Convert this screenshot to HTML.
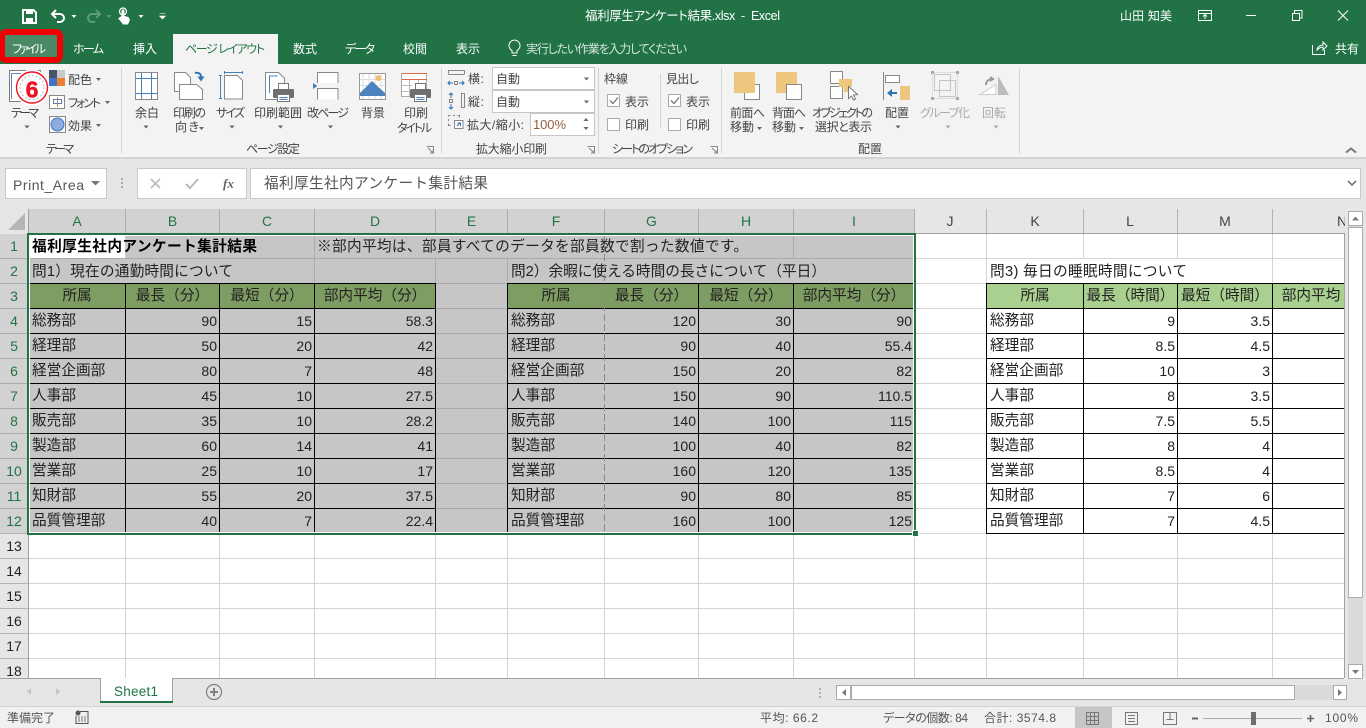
<!DOCTYPE html>
<html lang="ja"><head><meta charset="utf-8"><title>福利厚生アンケート結果.xlsx - Excel</title>
<style>
html,body{margin:0;padding:0;width:1366px;height:728px;overflow:hidden;background:#f1f1f1}
body{position:relative;font-family:"Liberation Sans","Noto Sans CJK JP",sans-serif}
svg{position:absolute;left:0;top:0;display:block}
svg text{font-family:"Liberation Sans","Noto Sans CJK JP",sans-serif;font-size:12px;fill:#444;white-space:pre;font-feature-settings:"palt"}
svg .w{fill:#fff}
svg .g{fill:#217346;font-size:14px}
svg .h{fill:#444;font-size:14px}
svg .n{fill:#222;font-size:14px}
svg .dis{fill:#aaa}
svg .c{fill:#222;font-size:14.67px;font-feature-settings:normal}
svg .s{fill:#555;font-size:12px}
#sheet{position:absolute;left:0;top:0;width:1344px;height:678px;overflow:hidden}
table{position:absolute;top:283px;border-collapse:separate;border-spacing:0;table-layout:fixed;border-top:1px solid #000;border-left:1px solid #000;color:#222}
td{box-sizing:border-box;height:25px;border-right:1px solid #000;border-bottom:1px solid #000;padding:0 2px 0 3px;font-size:14.67px;line-height:24px;white-space:nowrap;overflow:hidden}
td.r{text-align:right;font-size:14px;padding-right:2px}
tr.hd td{text-align:center;padding:0}
#t1 tr.hd td,#t2 tr.hd td{background:#7e9d63}
#t3 tr.hd td{background:#a9d08e}
#t2 td:first-child{border-right-color:transparent}
</style></head><body>
<svg width="1366" height="728" viewBox="0 0 1366 728">
<defs>
<g id="pr"><rect x="5.500" y=".5" width="10" height="7" fill="#fff" stroke="#777"/><rect x="0" y="6" width="21" height="9" rx="1.500" fill="#6f6f6f"/><rect x="4.500" y="11.500" width="12" height="7" fill="#fff" stroke="#777"/><path d="M6.500 14.500h8M6.500 16.500h8" stroke="#4a7ebb"/></g>
</defs>
<rect width="1366" height="64" fill="#217346"/>
<rect y="64" width="1366" height="93" fill="#f3f3f3"/>
<rect y="157" width="1366" height="2" fill="#d4d4d4"/>
<rect y="159" width="1366" height="50" fill="#e6e6e6"/>

<!-- QAT -->
<path d="M23 10h10.500l2.500 2.500V23H23z" fill="none" stroke="#fff" stroke-width="2"/><rect x="26" y="10" width="7" height="4" fill="#fff"/><rect x="26" y="18" width="7" height="5" fill="#fff"/>
<path d="M56 10l-4 4 4 4M52 14h8a4 4 0 0 1 0 8h-3" fill="none" stroke="#fff" stroke-width="2"/>
<path d="M71.500 15h5l-2.500 3z" fill="#fff"/>
<path d="M96 10l4 4-4 4M100 14h-8a4 4 0 0 0 0 8h3" fill="none" stroke="#5d9a79" stroke-width="2"/>
<path d="M106.500 15h5l-2.500 3z" fill="#5d9a79"/>
<path d="M121.500 16V11a1.500 1.500 0 0 1 3 0v5l4 1 1.500 3-2 4.500h-5l-3-4-2-2z" fill="#fff"/><circle cx="123" cy="11.500" r="3.500" fill="none" stroke="#fff" stroke-width="1.200"/>
<path d="M138.500 15h5l-2.500 3z" fill="#fff"/>
<path d="M159.500 13.500h6M159.500 16h6l-3 3z" fill="#fff" stroke="#fff" stroke-width=".6"/>

<text class="w" x="585" y="20" textLength="195" style="font-size:12.500px">福利厚生アンケート結果.xlsx  -  Excel</text>
<text class="w" x="1120" y="20" textLength="52">山田 知美</text>
<rect x="1198.500" y="10.500" width="13" height="10" fill="none" stroke="#fff"/><path d="M1199 13.500h12M1205 19v-4M1203 16.500l2-2 2 2" stroke="#fff" fill="none"/>
<path d="M1246 15.500h10" stroke="#fff"/>
<path d="M1292.500 13.500h7v7h-7zM1294.500 13v-2.500h7.500v7.500h-2.500" stroke="#fff" fill="none"/>
<path d="M1338 10.500l10 10M1348 10.500l-10 10" stroke="#fff" fill="none"/>

<!-- tabs -->
<rect x="173" y="34" width="105" height="30" fill="#f3f3f3"/>
<rect x="2" y="32" width="58" height="28" rx="4" fill="#4a8964" stroke="#f00000" stroke-width="6"/>
<text class="w" x="12" y="53" textLength="34">ファイル</text>
<text class="w" x="73" y="53" textLength="31">ホーム</text>
<text class="w" x="133" y="53" textLength="24">挿入</text>
<text x="185" y="53" textLength="80" style="fill:#217346">ページ レイアウト</text>
<text class="w" x="293" y="53" textLength="24">数式</text>
<text class="w" x="345" y="53" textLength="30">データ</text>
<text class="w" x="403" y="53" textLength="24">校閲</text>
<text class="w" x="456" y="53" textLength="24">表示</text>
<path d="M512 50.500a5.500 5.500 0 1 1 5 0v2.500h-5zM512.500 55.500h4" fill="none" stroke="#fff"/>
<text x="526" y="53" textLength="161" style="fill:#d5e5dc">実行したい作業を入力してください</text>
<path d="M1312.500 45v9.500h12V50M1317 50c0-3 3-5 6-5v-3l4 4-4 4v-3c-2 0-4 1-6 3z" fill="none" stroke="#fff"/>
<text class="w" x="1335" y="53" textLength="24">共有</text>

<!-- ribbon separators -->
<path d="M121.500 68v85M441.500 68v85M598.500 68v85M721.500 68v85M1019.500 68v85" stroke="#d4d4d4"/>
<path d="M660.500 74v54" stroke="#d4d4d4"/>

<!-- theme -->
<rect x="9.500" y="70.500" width="31" height="31" fill="#fff" stroke="#7d7d7d"/><path d="M12 73.500h25M11.500 73v26" stroke="#5b87c5"/>
<circle cx="32" cy="87.500" r="18" fill="#fff"/>
<circle cx="32" cy="87.500" r="15.500" fill="none" stroke="#f01020" stroke-width="1.400"/>
<circle cx="32" cy="87.500" r="12" fill="none" stroke="#c8c8c8" stroke-width="1.500" stroke-dasharray="2 2"/>
<text x="32" y="97.500" text-anchor="middle" style="font-size:23px;font-weight:700;fill:#ee1122;stroke:#ee1122;stroke-width:.5px">6</text>
<text x="11" y="117" textLength="28">テーマ</text><path d="M24.500 125.500h5l-2.500 3z" fill="#666"/>
<rect x="49" y="70" width="8" height="8" fill="#44546a"/><rect x="57" y="70" width="8" height="8" fill="#c8c8c8"/><rect x="49" y="78" width="8" height="8" fill="#4472c4"/><rect x="57" y="78" width="8" height="8" fill="#ed7d31"/>
<text x="68" y="84" textLength="24">配色</text><path d="M96 78h5l-2.500 3z" fill="#666"/>
<rect x="49.500" y="95.500" width="15" height="13" fill="#fff" stroke="#888"/><path d="M57.500 97v10" stroke="#d08040"/><path d="M53.500 99.500h8v4h-8z" fill="none" stroke="#5a80b5"/>
<text x="68" y="107" textLength="33">フォント</text><path d="M105 101h5l-2.500 3z" fill="#666"/>
<rect x="49.500" y="116.500" width="16" height="16" fill="#fff" stroke="#888"/><circle cx="57.500" cy="124.500" r="6.500" fill="#8faadc" stroke="#4472c4"/>
<text x="68" y="130" textLength="24">効果</text><path d="M96 124h5l-2.500 3z" fill="#666"/>
<text x="46" y="153" textLength="28">テーマ</text>

<!-- margins -->
<rect x="135.500" y="72.500" width="22" height="27" fill="#fff" stroke="#888"/><path d="M141.500 73v26M151.500 73v26M136 78.500h21M136 93.500h21" stroke="#4a7ebb"/>
<text x="135" y="117" textLength="24">余白</text><path d="M143.500 125.500h5l-2.500 3z" fill="#666"/>
<!-- orientation -->
<path d="M174.500 72.500h11l5 5v14h-16z" fill="#fff" stroke="#888"/><path d="M179.500 84.500h17l6 5v10h-23z" fill="#fff" stroke="#888"/>
<path d="M195 73c4-1 6 1 6 4" fill="none" stroke="#2f75b5" stroke-width="2"/><path d="M197.500 76.500h7l-3.500 5z" fill="#2f75b5"/>
<text x="173" y="117" textLength="33">印刷の</text><text x="175" y="131" textLength="24">向き</text><path d="M199 127h5l-2.500 3z" fill="#666"/>
<!-- size -->
<path d="M224.500 75.500h13l5 5v18.500h-18z" fill="#fff" stroke="#888"/><path d="M220.500 75v24M219 75.500h3M219 98.500h3M224 72.500h19M224.500 71v3M242.500 71v3" stroke="#4a7ebb" fill="none"/>
<text x="216" y="117" textLength="29">サイズ</text><path d="M229.500 125.500h5l-2.500 3z" fill="#666"/>
<!-- print area -->
<path d="M265.500 72.500h13l6 6v21h-19z" fill="#fff" stroke="#888"/><path d="M269.500 93v-17h8" fill="none" stroke="#4a7ebb"/>
<use href="#pr" x="273" y="83"/>
<text x="254" y="117" textLength="48">印刷範囲</text><path d="M278 125.500h5l-2.500 3z" fill="#666"/>
<!-- breaks -->
<path d="M317.500 83V72.500h20.500V83M317.500 99.500V88.500h20.500v11" fill="#fff" stroke="#888"/><path d="M313 83l4.500 3-4.500 3z" fill="#4a7ebb"/>
<text x="307" y="117" textLength="42">改ページ</text><path d="M328 125.500h5l-2.500 3z" fill="#666"/>
<!-- background -->
<rect x="359.500" y="73.500" width="26" height="26" fill="#fff" stroke="#999"/><path d="M363 74v25M369 74v25M375 74v25M381 74v25M360 79.500h25M360 85.500h25M360 92.500h25" stroke="#ddd"/>
<circle cx="378.500" cy="78" r="3" fill="#f0c070"/><path d="M360 93l12-12 13 12v3h-25z" fill="#4e84bd"/><path d="M376 84l9 8" stroke="#fff"/>
<text x="361" y="117" textLength="24">背景</text>
<!-- titles -->
<rect x="401.500" y="73.500" width="25" height="23" fill="#fff" stroke="#aaa"/><path d="M402 73.500h25M402 79.500h25" stroke="#d9694a"/><path d="M402 85.500h10M402 91.500h8M409.500 80v16M418.500 80v4" stroke="#bbb"/>
<use href="#pr" x="410" y="83"/>
<text x="404" y="117" textLength="24">印刷</text><text x="397" y="132" textLength="35">タイトル</text>
<text x="246" y="153" textLength="54">ページ設定</text>
<path d="M426.500 146.500h7v7M428 148l5 5M433 150v3h-3" fill="none" stroke="#888"/>

<!-- scale -->
<path d="M448.500 74.500V70.500h16v4M449 74.500h15" fill="none" stroke="#888"/><rect x="454.500" y="81.500" width="3" height="3" fill="none" stroke="#888"/><path d="M448 83h5M459 83h5M450 81l-2 2 2 2M462 81l2 2-2 2" fill="none" stroke="#2f75b5"/>
<rect x="461.500" y="93.500" width="3" height="14" fill="none" stroke="#888"/><path d="M451 93v5M451 104v5M449 95l2-2 2 2M449 107l2 2 2-2" fill="none" stroke="#2f75b5"/><rect x="449.500" y="99.500" width="3" height="3" fill="none" stroke="#888"/>
<text x="468" y="83" textLength="16">横:</text><text x="468" y="106" textLength="16">縦:</text>
<rect x="492.500" y="67.500" width="102" height="22" fill="#fff" stroke="#c6c6c6"/><rect x="492.500" y="90.500" width="102" height="22" fill="#fff" stroke="#c6c6c6"/>
<text x="496" y="83" textLength="24">自動</text><text x="496" y="106" textLength="24">自動</text>
<path d="M584 77.500h5l-2.500 3zM584 100.500h5l-2.500 3z" fill="#666"/>
<path d="M448.500 116.500v-1h2M453 115.500h2M457.500 115.500h2v2M448.500 119v2M448.500 123.500v2h2" fill="none" stroke="#888"/><rect x="454.500" y="120.500" width="8.500" height="8" fill="#fff" stroke="#888"/><path d="M457 126l3-3M457.500 123h3v3" fill="none" stroke="#2f75b5"/>
<text x="467" y="129" textLength="57">拡大/縮小:</text>
<rect x="530.500" y="113.500" width="64" height="22" fill="#fff" stroke="#c6c6c6"/>
<text x="533" y="129" textLength="33" style="fill:#94603a;font-size:13px">100%</text>
<path d="M583.500 121h5l-2.500-3zM583.500 127h5l-2.500 3z" fill="#666"/>
<text x="476" y="153" textLength="71">拡大縮小印刷</text>
<path d="M587.500 146.500h7v7M589 148l5 5M594 150v3h-3" fill="none" stroke="#888"/>

<!-- sheet options -->
<text x="604" y="83" textLength="24">枠線</text><text x="666" y="83" textLength="33">見出し</text>
<rect x="607.500" y="94.500" width="12" height="12" fill="#fff" stroke="#ababab"/><path d="M610 100.500l3 3 5-6" fill="none" stroke="#777" stroke-width="1.300"/>
<rect x="668.500" y="94.500" width="12" height="12" fill="#fff" stroke="#ababab"/><path d="M671 100.500l3 3 5-6" fill="none" stroke="#777" stroke-width="1.300"/>
<rect x="607.500" y="118.500" width="12" height="12" fill="#fff" stroke="#ababab"/><rect x="668.500" y="118.500" width="12" height="12" fill="#fff" stroke="#ababab"/>
<text x="625" y="106" textLength="24">表示</text><text x="686" y="106" textLength="24">表示</text>
<text x="625" y="129" textLength="24">印刷</text><text x="686" y="129" textLength="24">印刷</text>
<text x="612" y="153" textLength="81">シートのオプション</text>
<path d="M710.500 146.500h7v7M712 148l5 5M717 150v3h-3" fill="none" stroke="#888"/>

<!-- arrange -->
<rect x="744.500" y="84.500" width="15" height="15" fill="#fff" stroke="#888"/><rect x="734" y="72" width="21" height="21" fill="#edc77e"/>
<text x="730" y="117" textLength="35">前面へ</text><text x="730" y="131" textLength="24">移動</text><path d="M757 127h5l-2.500 3z" fill="#666"/>
<rect x="776" y="72" width="21" height="21" fill="#edc77e"/><rect x="786.500" y="84.500" width="15" height="15" fill="#fff" stroke="#888"/>
<text x="772" y="117" textLength="34">背面へ</text><text x="772" y="131" textLength="24">移動</text><path d="M799 127h5l-2.500 3z" fill="#666"/>
<rect x="830.500" y="71.500" width="12" height="12" fill="#fff" stroke="#888"/><rect x="830.500" y="86.500" width="12" height="12" fill="#fff" stroke="#888"/>
<path d="M839 79h13v8h-4v5h-4v-5h-5z" fill="#edc77e"/><path d="M848.500 86.500v12l3-2.500 2 4 2-1-2-4 4-.5z" fill="#fff" stroke="#777"/>
<text x="812" y="117" textLength="61">オブジェクトの</text><text x="815" y="131" textLength="57">選択と表示</text>
<path d="M883.500 72v28" stroke="#888"/><rect x="885.500" y="75.500" width="14" height="7" fill="#fff" stroke="#888"/><rect x="900" y="86" width="10" height="14" fill="#edc77e"/><path d="M887 93l5-4v3h5v2h-5v3z" fill="#2f75b5"/>
<text x="885" y="117" textLength="24">配置</text><path d="M895.500 125.500h5l-2.500 3z" fill="#666"/>
<!-- group disabled -->
<rect x="932.500" y="72.500" width="25" height="26" fill="none" stroke="#ddd"/><rect x="934.500" y="74.500" width="16" height="16" fill="#f6f3f6" stroke="#c4c4c4"/><rect x="939.500" y="80.500" width="16" height="16" fill="none" stroke="#c4c4c4"/>
<path d="M931 71h3v3h-3zM956 71h3v3h-3zM931 97h3v3h-3zM956 97h3v3h-3z" fill="#aaa"/>
<text class="dis" x="920" y="117" textLength="50">グループ化</text><path d="M945.500 125.500h5l-2.500 3z" fill="#aaa"/>
<path d="M998 76l11 19h-11z" fill="#bbb"/><path d="M980 94.500l16-10v10z" fill="#fff" stroke="#ccc"/><path d="M986 85c0-4 3-6 6-6" fill="none" stroke="#999" stroke-width="2"/><path d="M990 76l5 3-5 3z" fill="#999"/>
<text class="dis" x="982" y="117" textLength="24">回転</text><path d="M993.500 125.500h5l-2.500 3z" fill="#aaa"/>
<text x="858" y="153" textLength="24">配置</text>
<path d="M1346 152.500l5-4 5 4" fill="none" stroke="#777" stroke-width="2"/>

<!-- formula bar -->
<rect x="5.500" y="168.500" width="101" height="30" fill="#fff" stroke="#c8c8c8"/>
<text x="13" y="190" textLength="71" style="font-size:14px;fill:#555">Print_Area</text>
<path d="M91 181h9l-4.500 4.500z" fill="#777"/>
<path d="M121 178h2v2h-2zM121 182h2v2h-2zM121 186h2v2h-2z" fill="#aaa"/>
<rect x="137.500" y="168.500" width="109" height="30" fill="#fff" stroke="#c8c8c8"/>
<path d="M151 179l9 9M160 179l-9 9" stroke="#bbb" stroke-width="1.600"/>
<path d="M186 184l4 4 8-9" fill="none" stroke="#bbb" stroke-width="2"/>
<text x="223" y="188" style="font-family:'Liberation Serif',serif;font-style:italic;font-weight:700;font-size:13px;fill:#666">fx</text>
<rect x="250.500" y="168.500" width="1110" height="30" fill="#fff" stroke="#c8c8c8"/>
<text x="264" y="188" textLength="224" style="font-size:14.670px;fill:#555;font-feature-settings:normal">福利厚生社内アンケート集計結果</text>
<path d="M1348 181l4 4 4-4" fill="none" stroke="#666" stroke-width="1.500"/>

<!-- headers -->
<rect y="209" width="1366" height="25" fill="#e6e6e6"/>
<rect x="0" y="234" width="28" height="444" fill="#e6e6e6"/>
<rect x="29" y="209" width="886" height="24" fill="#d2d2d2"/>
<rect x="0" y="234" width="28" height="299" fill="#d2d2d2"/>
<path d="M25 213v17H8z" fill="#b5b5b5"/>
<path d="M28.500 209v469" stroke="#a0a0a0"/>
<path d="M28 233.500h1316M1344.500 233v445" stroke="#a0a0a0"/>
<path d="M125.500 209v24M219.500 209v24M314.500 209v24M435.500 209v24M507.500 209v24M604.500 209v24M698.500 209v24M793.500 209v24M914.500 209v24" stroke="#ababab"/>
<path d="M986.500 209v24M1083.500 209v24M1177.500 209v24M1272.500 209v24" stroke="#b4b4b4"/>
<path d="M0 258.500h28M0 283.500h28M0 308.500h28M0 333.500h28M0 358.500h28M0 383.500h28M0 408.500h28M0 433.500h28M0 458.500h28M0 483.500h28M0 508.500h28" stroke="#ababab"/>
<path d="M0 533.500h28M0 558.500h28M0 583.500h28M0 608.500h28M0 633.500h28M0 658.500h28" stroke="#b4b4b4"/>
<g text-anchor="middle">
<text class="g" x="77" y="226">A</text><text class="g" x="172.500" y="226">B</text><text class="g" x="267" y="226">C</text><text class="g" x="375" y="226">D</text><text class="g" x="471.500" y="226">E</text><text class="g" x="556" y="226">F</text><text class="g" x="651.500" y="226">G</text><text class="g" x="746" y="226">H</text><text class="g" x="854" y="226">I</text>
<text class="h" x="950" y="226">J</text><text class="h" x="1035" y="226">K</text><text class="h" x="1130" y="226">L</text><text class="h" x="1225" y="226">M</text>
<text class="g" x="14" y="251">1</text><text class="g" x="14" y="276">2</text><text class="g" x="14" y="301">3</text><text class="g" x="14" y="326">4</text><text class="g" x="14" y="351">5</text><text class="g" x="14" y="376">6</text><text class="g" x="14" y="401">7</text><text class="g" x="14" y="426">8</text><text class="g" x="14" y="451">9</text><text class="g" x="14" y="476">10</text><text class="g" x="14" y="501">11</text><text class="g" x="14" y="526">12</text>
<text class="n" x="14" y="551">13</text><text class="n" x="14" y="576">14</text><text class="n" x="14" y="601">15</text><text class="n" x="14" y="626">16</text><text class="n" x="14" y="651">17</text><text class="n" x="14" y="676">18</text>
</g>
<text class="h" x="1337" y="226">N</text>

<!-- scrollbar right -->
<rect x="1345" y="209" width="21" height="469" fill="#e6e6e6"/>
<rect x="1348" y="226" width="15" height="438" fill="#dadada"/>
<rect x="1348.500" y="211.500" width="14" height="14" fill="#fff" stroke="#ababab"/><path d="M1352 220.500h7l-3.500-4z" fill="#777"/>
<rect x="1348.500" y="227.500" width="14" height="370" fill="#fff" stroke="#ababab"/>
<rect x="1348.500" y="664.500" width="14" height="14" fill="#fff" stroke="#ababab"/><path d="M1352 670h7l-3.500 4z" fill="#777"/>

<!-- tabs row -->
<rect y="679" width="1366" height="27" fill="#e6e6e6"/>
<path d="M0 678.500h1344" stroke="#a0a0a0"/>
<path d="M31 688v7l-4-3.500zM56 688v7l4-3.500z" fill="#c4c4c4"/>
<rect x="100" y="678" width="73" height="24" fill="#fff"/><path d="M100.500 678v24M172.500 678v24" stroke="#a0a0a0"/><rect x="100" y="701" width="73" height="2" fill="#217346"/>
<text x="114" y="696" textLength="44" style="font-size:13.500px;fill:#217346">Sheet1</text>
<circle cx="214" cy="692" r="7.500" fill="none" stroke="#808080" stroke-width="1.200"/><path d="M210 692h8M214 688v8" stroke="#808080" stroke-width="2"/>
<path d="M819 688h2v2h-2zM819 692h2v2h-2zM819 696h2v2h-2z" fill="#b0b0b0"/>
<rect x="836.500" y="685.500" width="14" height="14" fill="#fff" stroke="#ababab"/><path d="M846 689v7l-4-3.500z" fill="#777"/>
<rect x="851" y="685" width="482" height="15" fill="#dadada"/>
<rect x="851.500" y="685.500" width="443" height="14" fill="#fff" stroke="#ababab"/>
<rect x="1333.500" y="685.500" width="13" height="14" fill="#fff" stroke="#ababab"/><path d="M1338 689v7l4-3.500z" fill="#777"/>

<!-- status -->
<rect y="706" width="1366" height="22" fill="#f1f1f1"/><path d="M0 706.500h1366" stroke="#d2d2d2"/>
<text class="s" x="7" y="722" textLength="48">準備完了</text>
<circle cx="78" cy="713" r="2.500" fill="#555"/><path d="M80 711.500h8v12H76v-8" fill="none" stroke="#555"/><path d="M78 717h8M78 719h8M78 721h8" stroke="#777" stroke-dasharray="2 1"/>
<text class="s" x="760" y="722" textLength="58">平均: 66.2</text>
<text class="s" x="883" y="722" textLength="85">データの個数: 84</text>
<text class="s" x="984" y="722" textLength="72">合計: 3574.8</text>
<rect x="1075" y="707" width="37" height="21" fill="#c6c6c6"/>
<path d="M1086.500 712.500h12v12h-12zM1090.500 712.500v12M1094.500 712.500v12M1086.500 716.500h12M1086.500 720.500h12" fill="none" stroke="#777"/>
<path d="M1125.500 712.500h12v12h-12zM1128 715.500h7M1128 718.500h7M1128 721.500h7" fill="none" stroke="#777"/>
<path d="M1163 712.500h13v12h-13zM1169.500 713v6M1166 719.500h7" fill="none" stroke="#777" transform="translate(.5,0)"/>
<path d="M1192 718.500h6" stroke="#666" stroke-width="2"/>
<path d="M1203 718.500h99" stroke="#aaa"/><rect x="1251" y="712" width="5" height="13" fill="#6e6e6e"/>
<path d="M1307 718.500h7M1310.500 715v7" stroke="#666" stroke-width="1.600"/>
<text class="s" x="1325" y="722" textLength="33">100%</text>
</svg>

<div id="sheet">
<svg width="1366" height="728" viewBox="0 0 1366 728">
<rect x="29" y="234" width="885" height="299" fill="#fff"/>
<rect x="29" y="234" width="885" height="299" fill="#c6c6c6"/>
<rect x="29" y="234" width="96" height="24" fill="#fff"/>
<rect x="915" y="234" width="429" height="444" fill="#fff"/>
<rect x="29" y="534" width="886" height="144" fill="#fff"/>
<path d="M29 258.500h885M314.500 234v49M435.500 258v25M507.500 258v25M793.500 234v24M436 283.500h71M436 308.500h71M436 333.500h71M436 358.500h71M436 383.500h71M436 408.500h71M436 433.500h71M436 458.500h71M436 483.500h71M436 508.500h71" stroke="#ababab" fill="none"/>
<path d="M915 258.500h429M915 283.500h71M915 308.500h71M915 333.500h71M915 358.500h71M915 383.500h71M915 408.500h71M915 433.500h71M915 458.500h71M915 483.500h71M915 508.500h71M915 533.500h71M986.500 234v49M1083.500 234v24M1177.500 234v24M1272.500 234v49" stroke="#d4d4d4" fill="none"/>
<path d="M29 558.500h1315M29 583.500h1315M29 608.500h1315M29 633.500h1315M29 658.500h1315M125.500 534v144M219.500 534v144M314.500 534v144M435.500 534v144M507.500 534v144M604.500 534v144M698.500 534v144M793.500 534v144M914.500 534v144M986.500 534v144M1083.500 534v144M1177.500 534v144M1272.500 534v144" stroke="#d4d4d4" fill="none"/>
<text x="32" y="251" textLength="225" style="font-size:14.670px;font-weight:700;fill:#000;font-feature-settings:normal">福利厚生社内アンケート集計結果</text>
<text class="c" x="317" y="251" textLength="431">※部内平均は、部員すべてのデータを部員数で割った数値です。</text>
<text class="c" x="32" y="276" textLength="201">問1）現在の通勤時間について</text>
<text class="c" x="511" y="276" textLength="315">問2）余暇に使える時間の長さについて（平日）</text>
<text class="c" x="990" y="276" textLength="197">問3) 毎日の睡眠時間について</text>
</svg>

<table id="t1" style="left:28px;width:408px"><colgroup><col style="width:97px"><col style="width:94px"><col style="width:95px"><col style="width:121px"></colgroup>
<tr class="hd"><td>所属</td><td>最長（分）</td><td>最短（分）</td><td>部内平均（分）</td></tr>
<tr><td>総務部</td><td class="r">90</td><td class="r">15</td><td class="r">58.3</td></tr>
<tr><td>経理部</td><td class="r">50</td><td class="r">20</td><td class="r">42</td></tr>
<tr><td>経営企画部</td><td class="r">80</td><td class="r">7</td><td class="r">48</td></tr>
<tr><td>人事部</td><td class="r">45</td><td class="r">10</td><td class="r">27.5</td></tr>
<tr><td>販売部</td><td class="r">35</td><td class="r">10</td><td class="r">28.2</td></tr>
<tr><td>製造部</td><td class="r">60</td><td class="r">14</td><td class="r">41</td></tr>
<tr><td>営業部</td><td class="r">25</td><td class="r">10</td><td class="r">17</td></tr>
<tr><td>知財部</td><td class="r">55</td><td class="r">20</td><td class="r">37.5</td></tr>
<tr><td>品質管理部</td><td class="r">40</td><td class="r">7</td><td class="r">22.4</td></tr>
</table>
<table id="t2" style="left:507px;width:408px"><colgroup><col style="width:97px"><col style="width:94px"><col style="width:95px"><col style="width:121px"></colgroup>
<tr class="hd"><td>所属</td><td>最長（分）</td><td>最短（分）</td><td>部内平均（分）</td></tr>
<tr><td>総務部</td><td class="r">120</td><td class="r">30</td><td class="r">90</td></tr>
<tr><td>経理部</td><td class="r">90</td><td class="r">40</td><td class="r">55.4</td></tr>
<tr><td>経営企画部</td><td class="r">150</td><td class="r">20</td><td class="r">82</td></tr>
<tr><td>人事部</td><td class="r">150</td><td class="r">90</td><td class="r">110.5</td></tr>
<tr><td>販売部</td><td class="r">140</td><td class="r">100</td><td class="r">115</td></tr>
<tr><td>製造部</td><td class="r">100</td><td class="r">40</td><td class="r">82</td></tr>
<tr><td>営業部</td><td class="r">160</td><td class="r">120</td><td class="r">135</td></tr>
<tr><td>知財部</td><td class="r">90</td><td class="r">80</td><td class="r">85</td></tr>
<tr><td>品質管理部</td><td class="r">160</td><td class="r">100</td><td class="r">125</td></tr>
</table>
<table id="t3" style="left:986px;width:408px"><colgroup><col style="width:97px"><col style="width:94px"><col style="width:95px"><col style="width:121px"></colgroup>
<tr class="hd"><td>所属</td><td>最長（時間）</td><td>最短（時間）</td><td>部内平均（分）</td></tr>
<tr><td>総務部</td><td class="r">9</td><td class="r">3.5</td><td></td></tr>
<tr><td>経理部</td><td class="r">8.5</td><td class="r">4.5</td><td></td></tr>
<tr><td>経営企画部</td><td class="r">10</td><td class="r">3</td><td></td></tr>
<tr><td>人事部</td><td class="r">8</td><td class="r">3.5</td><td></td></tr>
<tr><td>販売部</td><td class="r">7.5</td><td class="r">5.5</td><td></td></tr>
<tr><td>製造部</td><td class="r">8</td><td class="r">4</td><td></td></tr>
<tr><td>営業部</td><td class="r">8.5</td><td class="r">4</td><td></td></tr>
<tr><td>知財部</td><td class="r">7</td><td class="r">6</td><td></td></tr>
<tr><td>品質管理部</td><td class="r">7</td><td class="r">4.5</td><td></td></tr>
</table>

<svg width="1366" height="728" viewBox="0 0 1366 728">
<path d="M604.500 234v299" stroke="#8a8a8a" stroke-dasharray="7 3" fill="none"/>
<rect x="29.500" y="235.500" width="884" height="297" fill="none" stroke="#fff"/>
<rect x="28" y="234" width="887" height="300" fill="none" stroke="#217346" stroke-width="2"/>
<rect x="912" y="530" width="7" height="7" fill="#fff"/><rect x="913" y="531" width="5" height="5" fill="#217346"/>
</svg>
</div>
</body></html>
